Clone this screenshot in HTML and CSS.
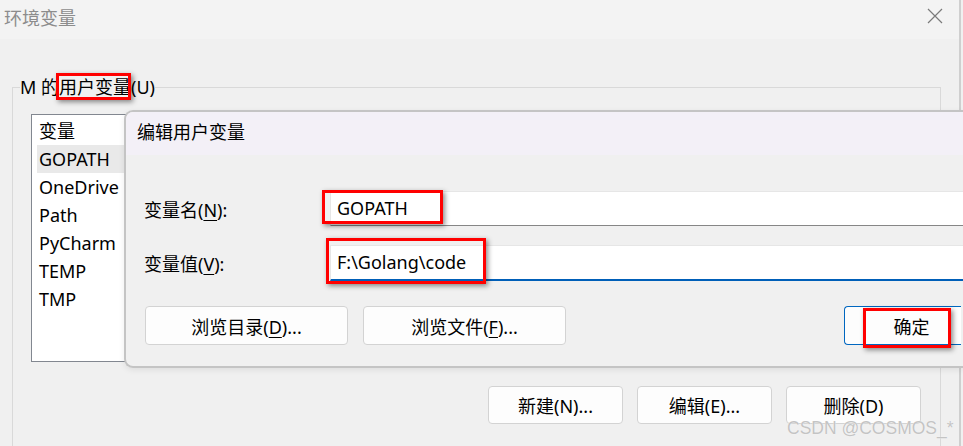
FILE: index.html
```html
<!DOCTYPE html>
<html lang="zh-CN">
<head>
    <meta charset="UTF-8">
    <meta name="viewport" content="width=device-width, initial-scale=1.0">
    <title>环境变量</title>
    <link rel="stylesheet" href="styles.css">
</head>
<body>
    <div class="window">
        <!-- Title bar -->
        <div class="titlebar">
            <span class="title">环境变量</span>
            <svg class="close" width="16" height="16" viewBox="0 0 16 16">
                <path d="M1 1 L15 15 M15 1 L1 15" stroke="#7a7a7a" stroke-width="1.2" fill="none"/>
            </svg>
        </div>

        <fieldset class="group">
            <legend>M 的用户变量(U)</legend>

            <div class="var-list">
                <div class="var-row head">变量</div>
                <div class="var-row selected">GOPATH</div>
                <div class="var-row">OneDrive</div>
                <div class="var-row">Path</div>
                <div class="var-row">PyCharm</div>
                <div class="var-row">TEMP</div>
                <div class="var-row">TMP</div>
            </div>

            <div class="group-actions">
                <button class="btn small">新建(N)...</button>
                <button class="btn small">编辑(E)...</button>
                <button class="btn small">删除(D)</button>
            </div>
        </fieldset>
    </div>

    <!-- Edit dialog on top -->
    <div class="dialog">
        <div class="dialog-title">编辑用户变量</div>
        <div class="dialog-body">
            <div class="field">
                <label>变量名(<u>N</u>):</label>
                <div class="input">GOPATH</div>
            </div>
            <div class="field">
                <label>变量值(<u>V</u>):</label>
                <div class="input focused">F:\Golang\code</div>
            </div>
            <div class="dialog-actions">
                <button class="btn wide">浏览目录(<u>D</u>)...</button>
                <button class="btn wide">浏览文件(<u>F</u>)...</button>
                <button class="btn ok">确定</button>
            </div>
        </div>
    </div>

    <!-- Annotations -->
    <div class="mark mark-group"></div>
    <div class="mark mark-name"></div>
    <div class="mark mark-value"></div>
    <div class="mark mark-ok"></div>

    <div class="watermark">CSDN @COSMOS_*</div>
</body>
</html>
```

FILE: styles.css
```css
/* General Styles */
body {
    margin: 0;
    width: 963px;
    height: 446px;
    overflow: hidden;
    position: relative;
    background-color: #f0f0f0;
    font-family: "Noto Sans", "Noto Sans CJK SC", sans-serif;
    font-size: 18px;
    color: #000;
}

u {
    text-decoration-thickness: 1px;
    text-underline-offset: 3px;
}

.window {
    width: 959px;
    height: 446px;
    border-right: 2px solid #cfcfcf;
}

/* Title bar */
.titlebar {
    height: 39px;
    background-color: #f3f3f3;
    display: flex;
    align-items: center;
    justify-content: space-between;
    padding: 0 16px 0 4px;
}

.title {
    color: #8c8c8c;
    line-height: 1;
    margin-top: -4px;
}

.close {
    margin-top: -8px;
}

/* Group box */
.group {
    box-sizing: border-box;
    width: 929px;
    height: 370px;
    margin: 37px 0 0 12px;
    padding: 16px 0 0 0;
    border: 1px solid #d9d9d9;
    border-bottom: none;
}

.group legend {
    margin-left: 7px;
    padding: 0;
    line-height: 22px;
}

.var-list {
    box-sizing: border-box;
    width: 200px;
    height: 248px;
    margin-left: 18px;
    padding: 2px 0 0 5px;
    background-color: #fff;
    border: 1px solid #828790;
}

.var-row {
    height: 28px;
    line-height: 28px;
    padding-left: 2px;
}

.var-row.selected {
    background-color: #e9e9e9;
}

.group-actions {
    display: flex;
    justify-content: flex-end;
    gap: 14px;
    margin-top: 24px;
    padding-right: 19px;
}

/* Buttons */
.btn {
    box-sizing: border-box;
    font-family: inherit;
    font-size: 18px;
    color: #000;
    background-color: #fdfdfd;
    border: 1px solid #d3d3d3;
    border-radius: 4px;
    padding: 0;
}

.btn.small {
    width: 135px;
    height: 38px;
}

.btn.wide {
    width: 203px;
    height: 39px;
}

.btn.ok {
    width: 117px;
    height: 39px;
    margin-left: 263px;
    padding-left: 17px;
    border-color: #0067c0;
    border-right: none;
    border-radius: 4px 0 0 4px;
}

/* Edit dialog */
.dialog {
    position: absolute;
    left: 124px;
    top: 110px;
    width: 839px;
    box-sizing: border-box;
    border: 2px solid #c4c4c4;
    border-right: none;
    border-radius: 9px 0 0 9px;
    background-color: #f0f0f0;
    overflow: hidden;
    box-shadow: 0 2px 6px rgba(0, 0, 0, 0.08);
}

.dialog-title {
    height: 43px;
    line-height: 41px;
    padding-left: 11px;
    background-color: #f3f0f7;
}

.dialog-body {
    padding: 36px 0 21px 18px;
}

.field {
    display: flex;
    align-items: center;
    margin-bottom: 19px;
}

.field label {
    width: 186px;
    flex-shrink: 0;
}

.input {
    flex: 1;
    box-sizing: border-box;
    height: 35px;
    line-height: 32px;
    padding-left: 6px;
    background-color: #fff;
    border: 1px solid #e6e6e6;
    border-right: none;
    border-bottom-color: #868686;
}

.input.focused {
    height: 36px;
    border-bottom: 2px solid #005fb8;
}

.dialog-actions {
    display: flex;
    gap: 15px;
    margin-top: 25px;
    padding-left: 1px;
}

/* Red annotation boxes */
.mark {
    position: absolute;
    box-sizing: border-box;
    border: 3px solid #ff0000;
    box-shadow: 2px 2px 5px rgba(0, 0, 0, 0.45);
}

.mark-group {
    left: 56px;
    top: 73px;
    width: 75px;
    height: 27px;
}

.mark-name {
    left: 322px;
    top: 190px;
    width: 121px;
    height: 34px;
}

.mark-value {
    left: 326px;
    top: 238px;
    width: 160px;
    height: 46px;
}

.mark-ok {
    left: 863px;
    top: 308px;
    width: 88px;
    height: 40px;
}

.watermark {
    position: absolute;
    left: 787px;
    top: 418px;
    font-family: "Liberation Sans", Arial, sans-serif;
    font-size: 17.5px;
    color: #c4c4c4;
    text-shadow: 0 0 1px #fff;
    white-space: nowrap;
}
```
